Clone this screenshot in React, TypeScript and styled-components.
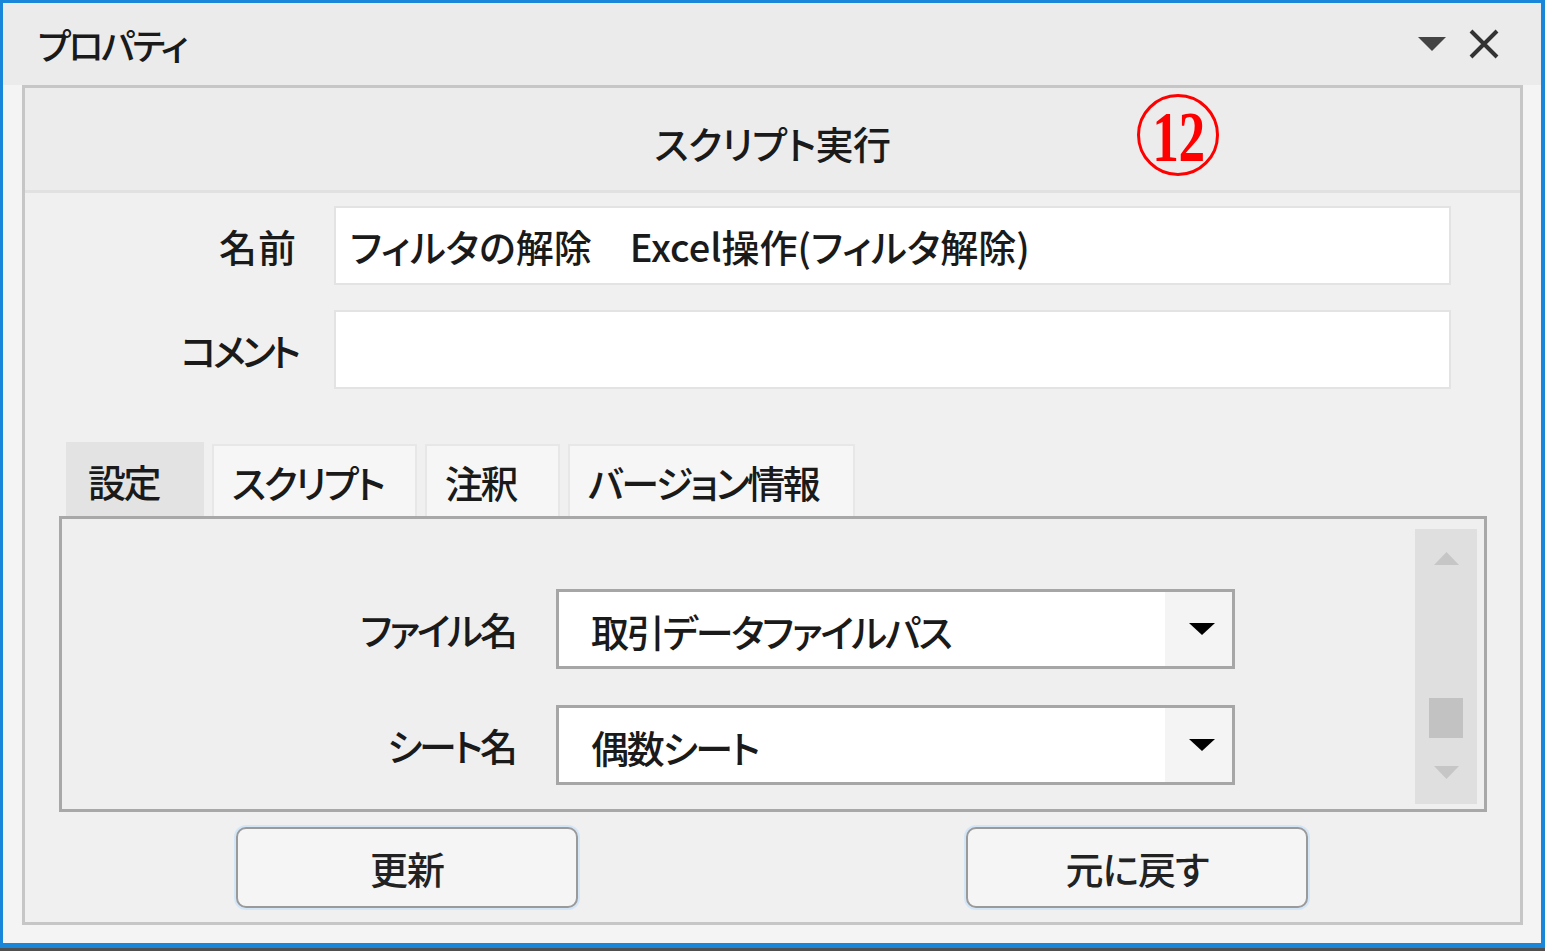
import React from 'react';
import styled, { createGlobalStyle } from 'styled-components';

const Global = createGlobalStyle`
  html, body { margin: 0; padding: 0; background: #4f4f4f; }
  body {
    font-family: "Noto Sans CJK JP", "Noto Sans", sans-serif;
    font-feature-settings: "palt";
    font-weight: 500;
    color: #1a1a1a;
  }
  #root { width: 1545px; height: 951px; }
`;

const Window = styled.div`
  box-sizing: border-box;
  width: 1545px;
  height: 948px;
  border: solid #1a86d9;
  border-width: 3px 4px 5px 3px;
  background: #f4f4f4;
  display: flex;
  flex-direction: column;
`;

const TitleBar = styled.div`
  flex: none;
  height: 82px;
  background: #ebebeb;
  display: flex;
  align-items: center;
  padding: 0 41px 0 35px;
`;

const TitleText = styled.div`
  flex: 1;
  font-size: 36px;
  letter-spacing: -2.5px;
  line-height: 1;
`;

const TitleIcons = styled.div`
  display: flex;
  align-items: center;
  gap: 22px;
`;

const Body = styled.div`
  flex: 1;
  display: flex;
  padding: 0 18px 18px 19px;
`;

const Panel = styled.div`
  flex: 1;
  display: flex;
  flex-direction: column;
  border: 3px solid #c6c6c6;
  background: #f0f0f0;
`;

const Header = styled.div`
  position: relative;
  flex: none;
  height: 105px;
  background: #ececec;
  border-bottom: 3px solid #e1e1e1;
  display: flex;
  align-items: center;
  justify-content: center;
  padding-top: 8px;
  box-sizing: border-box;
  font-size: 38px;
  letter-spacing: -0.5px;
  line-height: 1;
`;

const Marker = styled.div`
  position: absolute;
  left: 1112px;
  top: 6px;
  width: 76px;
  height: 76px;
  border: 3px solid #ff0000;
  border-radius: 50%;
  display: flex;
  align-items: center;
  justify-content: center;
  color: #ff0000;
`;

const MarkerDigits = styled.span`
  font-family: "Liberation Serif", "DejaVu Serif", serif;
  font-size: 72px;
  font-weight: 700;
  line-height: 1;
  transform: scaleX(0.74) translateY(2px);
  font-feature-settings: normal;
`;

const Form = styled.div`
  display: grid;
  grid-template-columns: 272px 1117px;
  column-gap: 37px;
  row-gap: 25px;
  padding-top: 13px;
`;

const Label = styled.div<{ $ls?: number }>`
  display: flex;
  align-items: center;
  justify-content: flex-end;
  font-size: 38px;
  letter-spacing: ${(p) => p.$ls ?? 0}px;
  line-height: 1;
`;

const TextBox = styled.div`
  box-sizing: border-box;
  height: 79px;
  background: #fff;
  border: 2px solid #e3e3e3;
  display: flex;
  align-items: center;
  padding-left: 14px;
  font-size: 38px;
  line-height: 1;
  white-space: pre;
`;

const TabStrip = styled.div`
  display: flex;
  align-items: flex-end;
  gap: 8px;
  margin: 53px 0 0 41px;
  height: 74px;
`;

const Tab = styled.div<{ $w: number; $active?: boolean }>`
  box-sizing: border-box;
  width: ${(p) => p.$w}px;
  height: ${(p) => (p.$active ? 74 : 72)}px;
  background: ${(p) => (p.$active ? '#e3e3e3' : '#f6f6f6')};
  border: 2px solid ${(p) => (p.$active ? '#e3e3e3' : '#e7e7e7')};
  border-bottom: none;
  display: flex;
  align-items: center;
  padding: 2px 0 0 ${(p) => (p.$active ? 20 : 18)}px;
  font-size: 38px;
  letter-spacing: -2.5px;
  line-height: 1;
`;

const TabPanel = styled.div`
  box-sizing: border-box;
  height: 296px;
  margin: 0 33px 0 34px;
  border: 3px solid #a8a8a8;
  background: #efefef;
  display: flex;
`;

const TabContent = styled.div`
  flex: 1;
  display: grid;
  grid-template-columns: 453px 679px;
  grid-auto-rows: 80px;
  column-gap: 41px;
  row-gap: 36px;
  align-content: start;
  padding-top: 70px;
`;

const Combo = styled.div`
  box-sizing: border-box;
  height: 80px;
  border: 3px solid #a6a6a6;
  background: #fff;
  display: flex;
`;

const ComboText = styled.div`
  flex: 1;
  display: flex;
  align-items: center;
  padding: 4px 0 0 32px;
  font-size: 38px;
  letter-spacing: -2.2px;
  line-height: 1;
`;

const ComboButton = styled.div`
  width: 67px;
  background: #f4f4f4;
  display: flex;
  align-items: center;
  justify-content: center;
  padding-left: 6px;
  box-sizing: border-box;
`;

const ScrollBar = styled.div`
  flex: none;
  width: 62px;
  margin: 10px 7px 5px 0;
  background: #dfdfdf;
  display: flex;
  flex-direction: column;
  align-items: center;
`;

const ScrollArrow = styled.div<{ $mt: number }>`
  margin-top: ${(p) => p.$mt}px;
  display: flex;
  & svg { display: block; }
`;

const ScrollThumb = styled.div`
  width: 34px;
  height: 40px;
  background: #c2c2c2;
  margin-top: 133px;
`;

const ButtonRow = styled.div`
  display: flex;
  gap: 388px;
  margin: 15px 0 0 211px;
`;

const Button = styled.div`
  box-sizing: border-box;
  width: 342px;
  height: 81px;
  border: 2px solid #9a9a9a;
  border-radius: 10px;
  box-shadow: 0 0 0 2px #d3e6f8;
  background: #f5f5f5;
  display: flex;
  align-items: center;
  justify-content: center;
  font-size: 38px;
  letter-spacing: -1px;
  line-height: 1;
  color: #222;
`;

const Arrow = ({ w, h, color, up }: { w: number; h: number; color: string; up?: boolean }) => (
  <svg width={w} height={h} viewBox={`0 0 ${w} ${h}`} style={{ display: 'block' }}>
    <polygon points={up ? `0,${h} ${w},${h} ${w / 2},0` : `0,0 ${w},0 ${w / 2},${h}`} fill={color} />
  </svg>
);

const CloseIcon = () => (
  <svg width="32" height="30" viewBox="0 0 32 30" style={{ display: 'block' }}>
    <path d="M3 2 L29 28 M29 2 L3 28" stroke="#333" strokeWidth="4" fill="none" />
  </svg>
);

export default function App() {
  return (
    <>
      <Global />
      <Window>
        <TitleBar>
          <TitleText>プロパティ</TitleText>
          <TitleIcons>
            <Arrow w={28} h={14} color="#444" />
            <CloseIcon />
          </TitleIcons>
        </TitleBar>
        <Body>
          <Panel>
            <Header>
              スクリプト実行
              <Marker>
                <MarkerDigits>12</MarkerDigits>
              </Marker>
            </Header>
            <Form>
              <Label $ls={1}>名前</Label>
              <TextBox>{'フィルタの解除　Excel操作(フィルタ解除)'}</TextBox>
              <Label $ls={-4}>コメント</Label>
              <TextBox />
            </Form>
            <TabStrip>
              <Tab $w={138} $active>設定</Tab>
              <Tab $w={205}>スクリプト</Tab>
              <Tab $w={135}>注釈</Tab>
              <Tab $w={287}>バージョン情報</Tab>
            </TabStrip>
            <TabPanel>
              <TabContent>
                <Label $ls={-3}>ファイル名</Label>
                <Combo>
                  <ComboText>取引データファイルパス</ComboText>
                  <ComboButton>
                    <Arrow w={26} h={12} color="#000" />
                  </ComboButton>
                </Combo>
                <Label $ls={-3}>シート名</Label>
                <Combo>
                  <ComboText>偶数シート</ComboText>
                  <ComboButton>
                    <Arrow w={26} h={12} color="#000" />
                  </ComboButton>
                </Combo>
              </TabContent>
              <ScrollBar>
                <ScrollArrow $mt={23}>
                  <Arrow w={25} h={13} color="#c6c6c6" up />
                </ScrollArrow>
                <ScrollThumb />
                <ScrollArrow $mt={28}>
                  <Arrow w={25} h={13} color="#c6c6c6" />
                </ScrollArrow>
              </ScrollBar>
            </TabPanel>
            <ButtonRow>
              <Button>更新</Button>
              <Button>元に戻す</Button>
            </ButtonRow>
          </Panel>
        </Body>
      </Window>
    </>
  );
}
